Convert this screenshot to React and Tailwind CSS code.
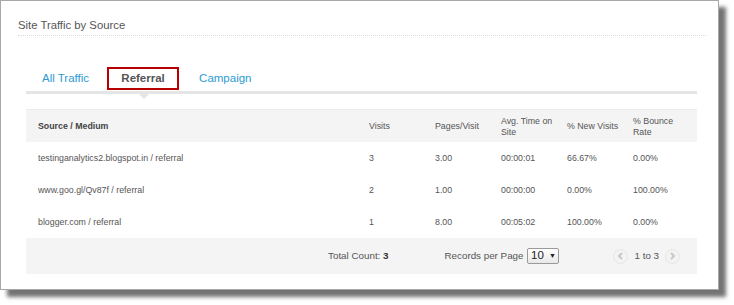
const rows = [
  ["testinganalytics2.blogspot.in / referral", "3", "3.00", "00:00:01", "66.67%", "0.00%"],
  ["www.goo.gl/Qv87f / referral", "2", "1.00", "00:00:00", "0.00%", "100.00%"],
  ["blogger.com / referral", "1", "8.00", "00:05:02", "100.00%", "0.00%"],
];

const cols = "grid grid-cols-[331px_66px_66px_66px_66px_76px] items-center";

const Chevron = ({ dir }) => (
  <span className="flex h-[15px] w-[15px] items-center justify-center rounded-full border border-[#e6e6e6] bg-[#f3f3f3]">
    <svg width="7" height="8" viewBox="0 0 7 8">
      <path
        d={dir === "left" ? "M5 1 L2 4 L5 7" : "M2 1 L5 4 L2 7"}
        fill="none"
        stroke="#c8c8c8"
        strokeWidth="2"
      />
    </svg>
  </span>
);

const App = () => {
  return (
    <div className="h-[305px] w-[734px] bg-white font-['Liberation_Sans',Arial,sans-serif]">
      <div className="h-[290px] w-[719px] border border-[#a8a8a8] bg-white shadow-[7px_7px_4px_rgba(0,0,0,0.55)]">
        {/* Title */}
        <div className="ml-[17px] mr-[12px] border-b border-dotted border-[#dadada] pb-[3px] pt-[17px] text-[11.3px] leading-[14px] text-[#555]">
          Site Traffic by Source
        </div>

        {/* Tabs */}
        <div className="ml-[25px] mt-[31px] w-[671px]">
          <div className="flex h-[23px] items-center pl-[16px] text-[11.5px]">
            <span className="text-[#2d9bd3]">All Traffic</span>
            <span className="ml-[18px] flex h-[23px] w-[72px] items-center justify-center border-2 border-[#b80000] font-bold text-[#555]">
              Referral
            </span>
            <span className="ml-[20px] text-[#2d9bd3]">Campaign</span>
          </div>
          <div className="relative mt-[1px] h-[3px] bg-[#e5e5e5]">
            <div className="absolute left-[113px] top-[3px] h-0 w-0 border-l-[5px] border-r-[5px] border-t-[5px] border-l-transparent border-r-transparent border-t-[#e5e5e5]" />
          </div>

          {/* Table */}
          <div className="mt-[15px] text-[8.8px] text-[#555]">
            <div className={`${cols} h-[33px] border-t border-[#ececec] bg-[#f4f4f4] pt-[1px] leading-[11px]`}>
              <div className="pl-[12px] font-bold text-[#444]">Source / Medium</div>
              <div className="pl-[12px]">Visits</div>
              <div className="pl-[12px]">Pages/Visit</div>
              <div className="pl-[12px]">
                Avg. Time on
                <br />
                Site
              </div>
              <div className="pl-[12px]">% New Visits</div>
              <div className="pl-[12px]">
                % Bounce
                <br />
                Rate
              </div>
            </div>
            {rows.map((r, i) => (
              <div key={i} className={`${cols} h-[32px] bg-white pt-[1px]`}>
                {r.map((c, j) => (
                  <div key={j} className="pl-[12px]">
                    {c}
                  </div>
                ))}
              </div>
            ))}
            <div className="flex h-[36px] items-center justify-end bg-[#f4f4f4] pr-[17px] text-[9.8px]">
              <span>
                Total Count: <b className="text-[#333]">3</b>
              </span>
              <span className="ml-[56px]">Records per Page</span>
              <span className="ml-[4px] flex h-[16px] w-[32px] items-center justify-center gap-[5px] rounded-[2px] border border-[#9a9a9a] bg-gradient-to-b from-white to-[#e8e8e8] text-[11.5px] text-[#222]">
                10 <span className="text-[7px]">▼</span>
              </span>
              <span className="ml-[54px] flex items-center gap-[6px]">
                <Chevron dir="left" />
                <span>1 to 3</span>
                <Chevron dir="right" />
              </span>
            </div>
          </div>
        </div>
      </div>
    </div>
  );
};

export default App;
